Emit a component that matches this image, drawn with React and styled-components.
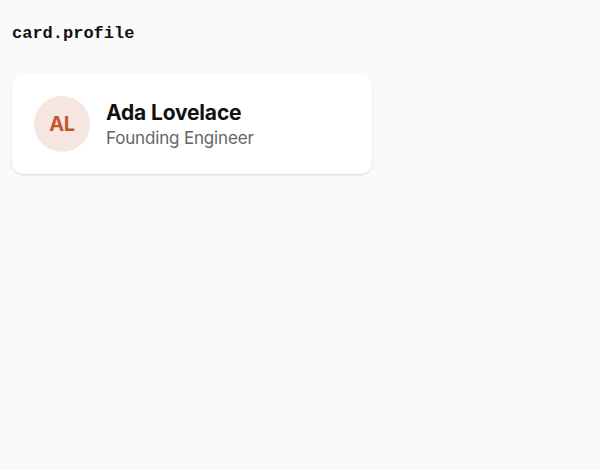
import styled, { createGlobalStyle } from "styled-components";

const GlobalStyle = createGlobalStyle`
  html, body {
    margin: 0;
    background: #fafafa;
  }
  body {
    font-family: Inter, "Liberation Sans", sans-serif;
  }
`;

const Page = styled.div`
  padding: 24px 12px;
  display: flex;
  flex-direction: column;
  align-items: flex-start;
  gap: 30px;
`;

const Label = styled.div`
  font-family: "Liberation Mono", "DejaVu Sans Mono", monospace;
  font-weight: 700;
  font-size: 17px;
  line-height: 20px;
  color: #111;
`;

const Card = styled.div`
  box-sizing: border-box;
  width: 360px;
  height: 100px;
  padding: 0 22px;
  display: flex;
  align-items: center;
  gap: 16px;
  background: #fff;
  border-radius: 12px;
  box-shadow: 0 1px 3px rgba(0, 0, 0, 0.1), 0 1px 2px rgba(0, 0, 0, 0.04);
`;

const Avatar = styled.div`
  width: 56px;
  height: 56px;
  border-radius: 50%;
  background: ${(p) => p.bg};
  color: ${(p) => p.fg};
  display: flex;
  align-items: center;
  justify-content: center;
  font-weight: 700;
  font-size: 20px;
  letter-spacing: -0.02em;
  flex-shrink: 0;
`;

const Info = styled.div`
  display: flex;
  flex-direction: column;
  gap: 1px;
`;

const Name = styled.div`
  font-weight: 700;
  font-size: 21px;
  line-height: 26px;
  letter-spacing: -0.008em;
  color: #111;
`;

const Role = styled.div`
  font-size: 17px;
  line-height: 22px;
  letter-spacing: -0.01em;
  color: #666;
`;

export default function App() {
  return (
    <>
      <GlobalStyle />
      <Page>
        <Label>card.profile</Label>
        <Card>
          <Avatar bg="#f6e6e1" fg="#c4552f">AL</Avatar>
          <Info>
            <Name>Ada Lovelace</Name>
            <Role>Founding Engineer</Role>
          </Info>
        </Card>
      </Page>
    </>
  );
}
